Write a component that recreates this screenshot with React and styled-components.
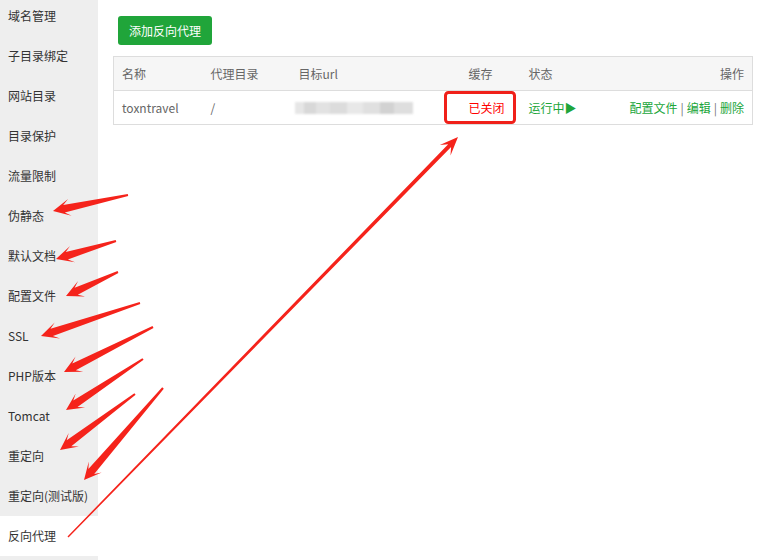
import React from 'react';
import styled, { createGlobalStyle } from 'styled-components';

const GlobalStyle = createGlobalStyle`
  html, body {
    margin: 0;
    padding: 0;
    background: #fff;
    overflow: hidden;
  }
  body {
    font-family: "Noto Sans CJK SC", "Noto Sans", sans-serif;
    font-size: 12px;
    color: #333;
  }
`;

const Page = styled.div`
  position: relative;
  display: flex;
  width: 759px;
  height: 560px;
  overflow: hidden;
`;

const Sidebar = styled.ul`
  width: 98px;
  flex-shrink: 0;
  margin: 0;
  padding: 0;
  list-style: none;
  background: #eee;
  height: 100%;
  overflow: hidden;
`;

const SideList = styled.div`
  margin-top: -4px;
`;

const SideItem = styled.li`
  height: 40px;
  line-height: 40px;
  padding-left: 8px;
  font-size: 12px;
  color: #333;
  white-space: nowrap;
  background: ${(p) => (p.$active ? '#fff' : 'transparent')};
`;

const Main = styled.div`
  flex: 1;
  padding: 16px 6px 0 15px;
`;

const AddButton = styled.button`
  display: block;
  height: 29px;
  margin: 0 0 11px 5px;
  padding: 0 11px;
  border: none;
  border-radius: 3px;
  background: #20a53a;
  color: #fff;
  font-family: inherit;
  font-size: 12px;
  cursor: pointer;
`;

const Table = styled.table`
  width: 100%;
  border-collapse: collapse;
  border: 1px solid #ddd;
  table-layout: fixed;
  color: #666;
`;

const Th = styled.th`
  height: 33px;
  padding: 0 8px;
  background: #f6f6f6;
  border-bottom: 1px solid #ddd;
  font-weight: normal;
  font-size: 12px;
  text-align: ${(p) => p.$align || 'left'};
`;

const Td = styled.td`
  height: 33px;
  padding: 0 8px;
  font-size: 12px;
  white-space: nowrap;
  text-align: ${(p) => p.$align || 'left'};
`;

const BlurUrl = styled.div`
  width: 118px;
  height: 12px;
  margin-left: -4px;
  background: linear-gradient(
    90deg,
    #e6e6e6 0 8%,
    #d8d8d8 8% 18%,
    #e2e2e2 18% 30%,
    #dcdcdc 30% 44%,
    #e8e8e8 44% 58%,
    #e0e0e0 58% 72%,
    #d2d2d2 72% 84%,
    #dedede 84% 100%
  );
  filter: blur(1px);
`;

const Closed = styled.span`
  color: #f00;
`;

const Green = styled.span`
  color: #20a53a;
`;

const Sep = styled.span`
  color: #777;
  margin: 0 3px;
`;

const Overlay = styled.svg`
  position: absolute;
  left: 0;
  top: 0;
  pointer-events: none;
`;

const menu = [
  '域名管理',
  '子目录绑定',
  '网站目录',
  '目录保护',
  '流量限制',
  '伪静态',
  '默认文档',
  '配置文件',
  'SSL',
  'PHP版本',
  'Tomcat',
  '重定向',
  '重定向(测试版)',
  '反向代理',
  '',
];

// tapered arrow: thin at the tail, wide at the head
function arrowPoints(x1, y1, x2, y2, tailW, shaftW, headLen, headW) {
  const dx = x2 - x1;
  const dy = y2 - y1;
  const len = Math.hypot(dx, dy);
  const ux = dx / len;
  const uy = dy / len;
  const nx = -uy;
  const ny = ux;
  const at = (back, side) => [x2 - ux * back + nx * side, y2 - uy * back + ny * side];
  const pts = [
    [x1 + nx * tailW, y1 + ny * tailW],
    at(headLen * 0.75, shaftW),
    at(headLen * 1.15, headW),
    [x2, y2],
    at(headLen * 1.15, -headW),
    at(headLen * 0.75, -shaftW),
    [x1 - nx * tailW, y1 - ny * tailW],
  ];
  return pts.map((p) => p.map((v) => v.toFixed(1)).join(',')).join(' ');
}

const arrows = [
  [128, 195, 53, 211],
  [116, 241, 56, 259],
  [118, 272, 66, 296],
  [140, 303, 41, 336],
  [153, 327, 64, 372],
  [143, 359, 66, 410],
  [135, 394, 60, 450],
  [163, 388, 84, 480],
];

export default function App() {
  return (
    <>
      <GlobalStyle />
      <Page>
        <Sidebar>
          <SideList>
            {menu.map((m, i) => (
              <SideItem key={i} $active={m === '反向代理'}>
                {m}
              </SideItem>
            ))}
          </SideList>
        </Sidebar>
        <Main>
          <AddButton>添加反向代理</AddButton>
          <Table>
            <colgroup>
              <col style={{ width: 89 }} />
              <col style={{ width: 88 }} />
              <col style={{ width: 170 }} />
              <col style={{ width: 60 }} />
              <col style={{ width: 90 }} />
              <col />
            </colgroup>
            <thead>
              <tr>
                <Th>名称</Th>
                <Th>代理目录</Th>
                <Th>目标url</Th>
                <Th>缓存</Th>
                <Th>状态</Th>
                <Th $align="right">操作</Th>
              </tr>
            </thead>
            <tbody>
              <tr>
                <Td>toxntravel</Td>
                <Td>/</Td>
                <Td>
                  <BlurUrl />
                </Td>
                <Td>
                  <Closed>已关闭</Closed>
                </Td>
                <Td>
                  <Green>运行中▶</Green>
                </Td>
                <Td $align="right">
                  <Green>配置文件</Green>
                  <Sep>|</Sep>
                  <Green>编辑</Green>
                  <Sep>|</Sep>
                  <Green>删除</Green>
                </Td>
              </tr>
            </tbody>
          </Table>
        </Main>
        <Overlay width="759" height="560" viewBox="0 0 759 560">
          <rect x="445.5" y="92.5" width="69" height="30" rx="3" fill="none" stroke="#f0201a" strokeWidth="3" />
          {arrows.map((a, i) => (
            <polygon key={i} points={arrowPoints(...a, 1, 3.8, 15, 8.5)} fill="#f5231b" />
          ))}
          <polygon points={arrowPoints(68, 537, 458, 137, 0.7, 2, 16, 7.5)} fill="#f5231b" />
        </Overlay>
      </Page>
    </>
  );
}
